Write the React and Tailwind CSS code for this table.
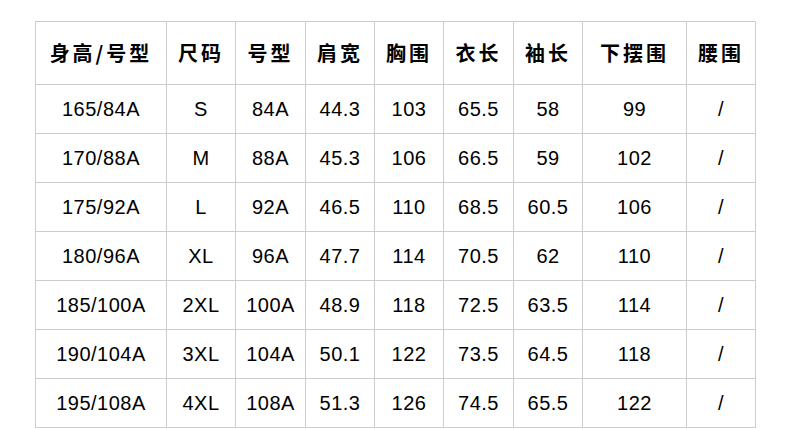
const headers = ["身高/号型", "尺码", "号型", "肩宽", "胸围", "衣长", "袖长", "下摆围", "腰围"];

const widths = ["w-[131px]", "w-[69px]", "w-[70px]", "w-[69px]", "w-[69px]", "w-[70px]", "w-[69px]", "w-[104px]", "w-[69px]"];

const rows = [
  ["165/84A", "S", "84A", "44.3", "103", "65.5", "58", "99", "/"],
  ["170/88A", "M", "88A", "45.3", "106", "66.5", "59", "102", "/"],
  ["175/92A", "L", "92A", "46.5", "110", "68.5", "60.5", "106", "/"],
  ["180/96A", "XL", "96A", "47.7", "114", "70.5", "62", "110", "/"],
  ["185/100A", "2XL", "100A", "48.9", "118", "72.5", "63.5", "114", "/"],
  ["190/104A", "3XL", "104A", "50.1", "122", "73.5", "64.5", "118", "/"],
  ["195/108A", "4XL", "108A", "51.3", "126", "74.5", "65.5", "122", "/"],
];

export default function App() {
  return (
    <div className="w-[790px] h-[428px] bg-white pl-[35px] pt-[21px] overflow-hidden">
      <table className="table-fixed border-collapse w-[721px] text-black">
        <colgroup>
          {widths.map((w, i) => (
            <col key={i} className={w} />
          ))}
        </colgroup>
        <thead>
          <tr className="h-[63px]">
            {headers.map((h) => (
              <th
                key={h}
                className="border border-[#cccccc] p-0 text-center font-bold text-[20px] tracking-[3px] font-['Noto_Sans_CJK_SC',sans-serif]"
              >
                {h}
              </th>
            ))}
          </tr>
        </thead>
        <tbody>
          {rows.map((r) => (
            <tr key={r[0]} className="h-[49px]">
              {r.map((c, i) => (
                <td
                  key={i}
                  className="border border-[#cccccc] p-0 text-center text-[20px] tracking-[0.5px] font-['Liberation_Sans',sans-serif]"
                >
                  {c}
                </td>
              ))}
            </tr>
          ))}
        </tbody>
      </table>
    </div>
  );
}
